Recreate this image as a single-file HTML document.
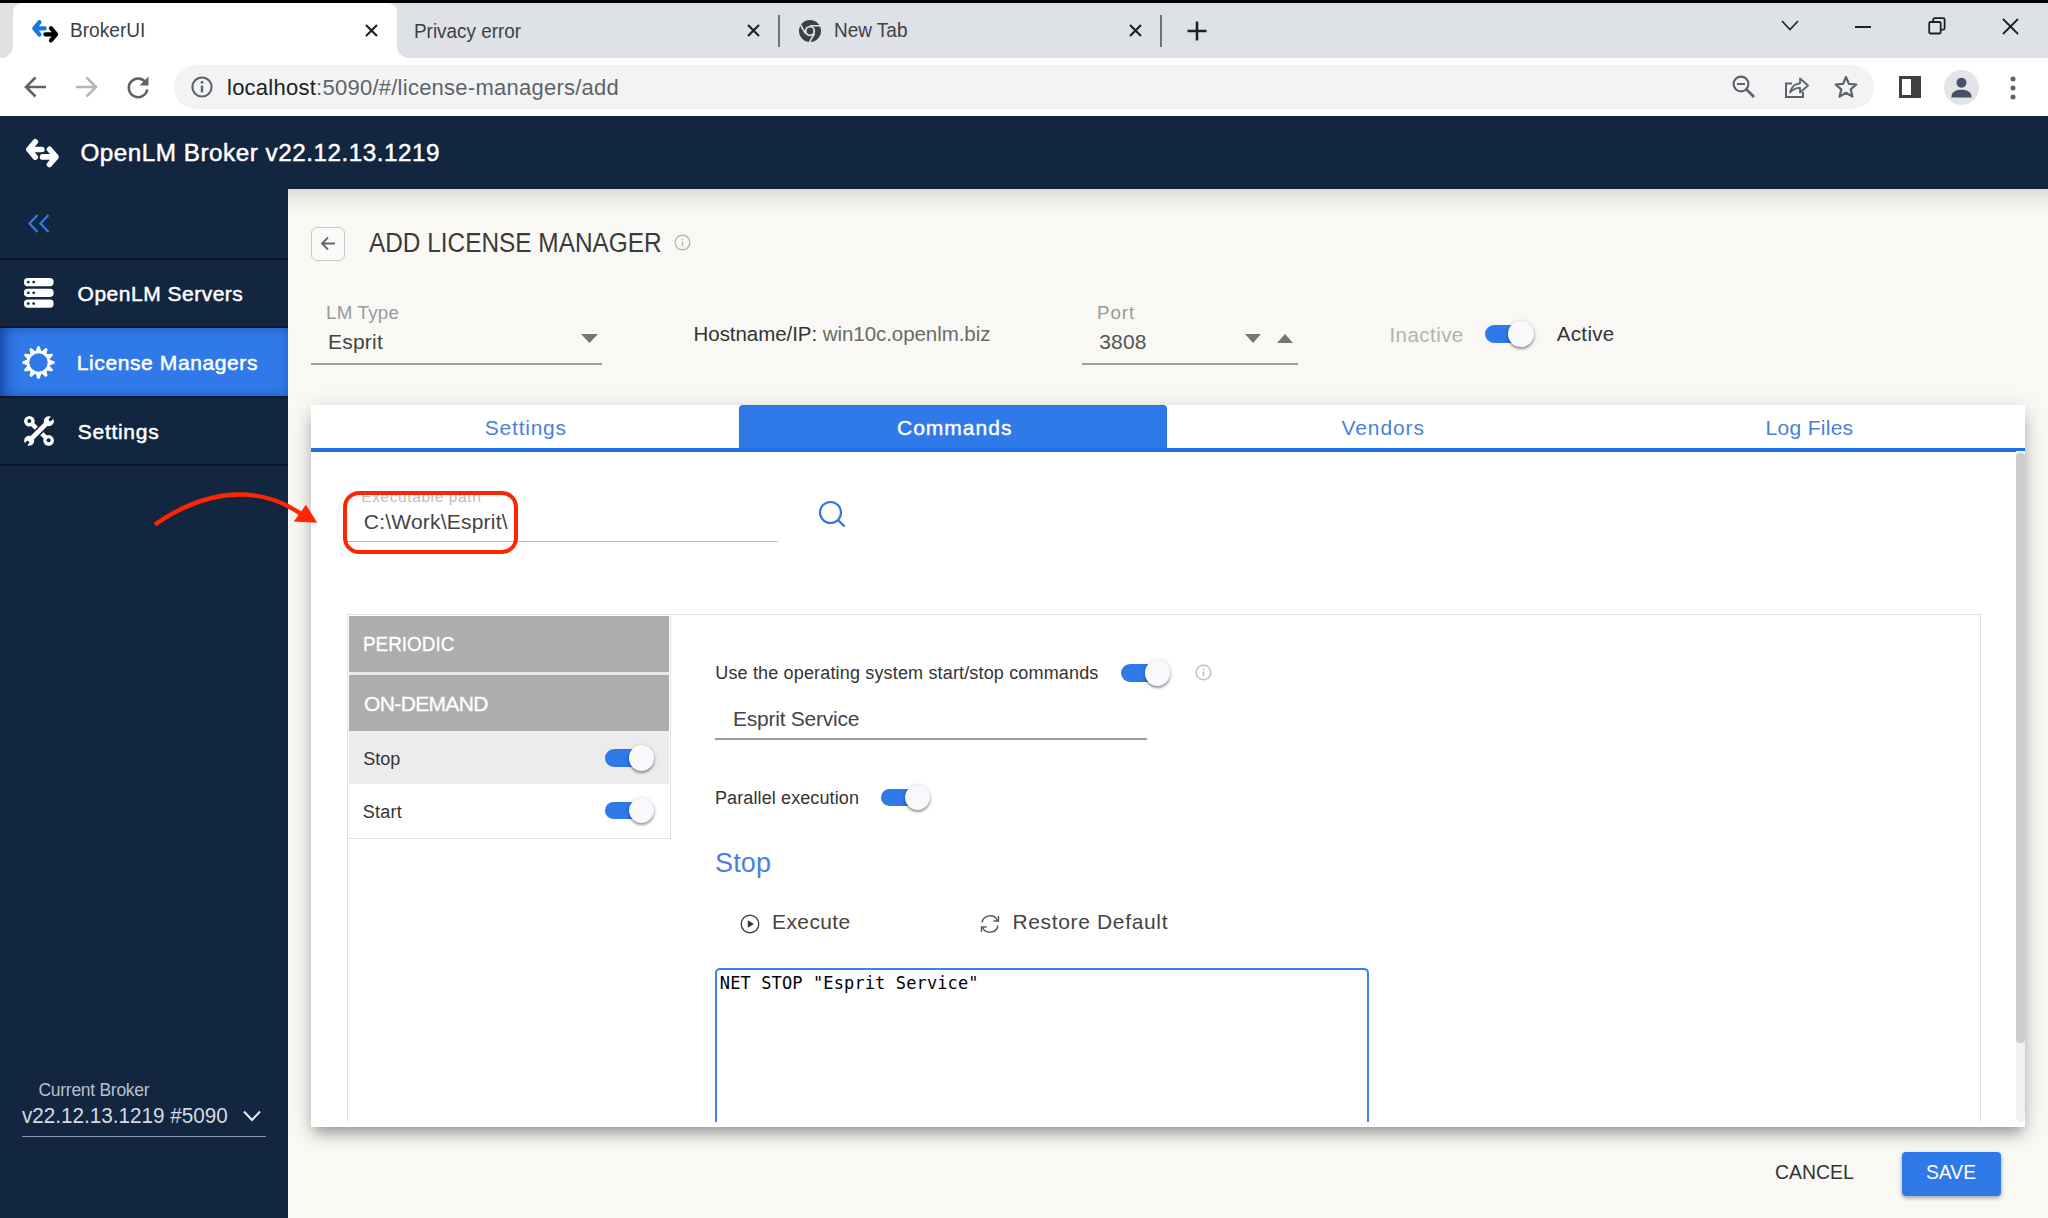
<!DOCTYPE html>
<html lang="en">
<head>
<meta charset="utf-8">
<title>BrokerUI</title>
<style>
*{box-sizing:border-box;margin:0;padding:0}
html,body{width:2048px;height:1218px;overflow:hidden;background:#f9f8f5;font-family:"Liberation Sans",sans-serif;color:#333}
.abs,.t{position:absolute}
.t{white-space:nowrap;line-height:1}
svg{position:absolute;overflow:visible}
/* browser chrome */
#topline{left:0;top:0;width:2048px;height:3px;background:#000}
#tabstrip{left:0;top:3px;width:2048px;height:55px;background:#dee1e6}
#activetab{left:12.600px;top:3px;width:384px;height:55px;background:#fff;border-radius:9px 9px 0 0}
#toolbar{left:0;top:58px;width:2048px;height:58px;background:#fff}
#urlpill{left:174px;top:65px;width:1700px;height:44px;border-radius:22px;background:#f1f3f4}
/* app */
#apphead{left:0;top:116px;width:2048px;height:73px;background:#12263f}
#sidebar{left:0;top:189px;width:288px;height:1029px;background:#12263f}
#main{left:288px;top:189px;width:1760px;height:1029px;background:#f9f8f5}

.tab{font-size:21px;transform:translateX(-50%)}
.tg{width:50px;height:18px}
.tg i{position:absolute;left:0;top:0;width:44px;height:17.5px;border-radius:9px;background:#2f79e8}
.tg b{position:absolute;left:23.5px;top:-4px;width:25.5px;height:25.5px;border-radius:50%;background:#f8f9fc;box-shadow:0 2px 2px rgba(0,0,0,.28),0 1px 4px rgba(0,0,0,.25)}
</style>
</head>
<body>
<!-- ===== Browser chrome ===== -->
<div class="abs" id="tabstrip"></div>
<div class="abs" style="left:0;top:3px;width:13px;height:55px;background:#e1e1e1"></div>
<div class="abs" id="topline"></div>
<div class="abs" id="activetab"></div>
<div class="abs" id="toolbar"></div>
<div class="abs" id="urlpill"></div>

<!-- tab flares -->
<svg style="left:0.600px;top:46px" width="12" height="12" viewBox="0 0 12 12"><path d="M12 12H0A12 12 0 0 0 12 0Z" fill="#fff"/></svg>
<svg style="left:396.600px;top:46px" width="12" height="12" viewBox="0 0 12 12"><path d="M0 12H12A12 12 0 0 1 0 0Z" fill="#fff"/></svg>
<!-- favicon active tab -->
<svg style="left:31.800px;top:18.600px" width="26.400" height="24.400" viewBox="0 0 32.8 28.1" fill="none" stroke-linecap="round" stroke-linejoin="round">
  <path d="M9.300 2.800L2.850 10.500L9.300 18.200M2.850 10.500H15.850" stroke="#1a73e8" stroke-width="5.200"/>
  <path d="M23.500 10.300L29.950 17.900L23.500 25.500M29.950 17.900H16.550" stroke="#fff" stroke-width="7.400"/>
  <path d="M23.500 10.300L29.950 17.900L23.500 25.500M29.950 17.900H16.550" stroke="#000" stroke-width="5.200"/>
</svg>
<span class="t" id="tab1" style="left:70.4px;top:20.2px;font-size:20.5px;color:#3c4043;letter-spacing:0px;transform:scaleX(0.932);transform-origin:0 0">BrokerUI</span>
<svg style="left:365px;top:24px" width="13" height="13" viewBox="0 0 13 13"><path d="M1 1L12 12M12 1L1 12" stroke="#202124" stroke-width="2.2" fill="none"/></svg>
<span class="t" id="tab2" style="left:414.4px;top:20.8px;font-size:20.5px;color:#3c4043;letter-spacing:0px;transform:scaleX(0.921);transform-origin:0 0">Privacy error</span>
<svg style="left:747px;top:24px" width="13" height="13" viewBox="0 0 13 13"><path d="M1 1L12 12M12 1L1 12" stroke="#202124" stroke-width="2.2" fill="none"/></svg>
<div class="abs" style="left:778px;top:15px;width:1.500px;height:32px;background:#6f7277"></div>
<!-- chrome favicon -->
<svg style="left:798px;top:19px" width="24" height="24" viewBox="0 0 24 24">
  <circle cx="12" cy="12" r="11" fill="#3c4043"/>
  <circle cx="12" cy="12" r="5.2" fill="#dee1e6"/>
  <circle cx="12" cy="12" r="3.4" fill="#3c4043"/>
  <path d="M12 6.8H22M7.5 14.6L2.6 6M16.5 14.6L11.5 23" stroke="#dee1e6" stroke-width="1.6" fill="none"/>
</svg>
<span class="t" id="tab3" style="left:834.4px;top:20.2px;font-size:20.5px;color:#3c4043;letter-spacing:0px;transform:scaleX(0.925);transform-origin:0 0">New Tab</span>
<svg style="left:1129px;top:24px" width="13" height="13" viewBox="0 0 13 13"><path d="M1 1L12 12M12 1L1 12" stroke="#202124" stroke-width="2.2" fill="none"/></svg>
<div class="abs" style="left:1160px;top:15px;width:1.500px;height:32px;background:#6f7277"></div>
<svg style="left:1187px;top:21px" width="20" height="20" viewBox="0 0 20 20"><path d="M10 0.5V19.5M0.5 10H19.5" stroke="#202124" stroke-width="2.6" fill="none"/></svg>
<!-- window controls -->
<svg style="left:1781px;top:20px" width="18" height="11" viewBox="0 0 18 11"><path d="M1 1L9 9.5L17 1" stroke="#202124" stroke-width="1.6" fill="none"/></svg>
<div class="abs" style="left:1855px;top:26px;width:16px;height:2px;background:#202124"></div>
<svg style="left:1928px;top:17px" width="18" height="18" viewBox="0 0 18 18"><rect x="1.2" y="5" width="11.5" height="11.5" rx="1.2" stroke="#202124" stroke-width="1.8" fill="none"/><path d="M5.200 4.600V2.500a1.300 1.300 0 0 1 1.300-1.300H15.300a1.300 1.300 0 0 1 1.300 1.300V11.300a1.300 1.300 0 0 1-1.300 1.300H13.200" stroke="#202124" stroke-width="1.8" fill="none"/></svg>
<svg style="left:2002px;top:18px" width="17" height="17" viewBox="0 0 17 17"><path d="M1 1L16 16M16 1L1 16" stroke="#202124" stroke-width="1.8" fill="none"/></svg>
<!-- toolbar nav -->
<svg style="left:24px;top:76px" width="23" height="22" viewBox="0 0 23 22"><path d="M22 11H3M11.5 1.5L2 11L11.5 20.5" stroke="#5f6368" stroke-width="2.6" fill="none"/></svg>
<svg style="left:75px;top:76px" width="23" height="22" viewBox="0 0 23 22"><path d="M1 11H20M11.5 1.5L21 11L11.5 20.5" stroke="#b4b6b9" stroke-width="2.6" fill="none"/></svg>
<svg style="left:126px;top:75px" width="24" height="24" viewBox="0 0 24 24"><path d="M20.2 8.2A9.3 9.3 0 1 0 21.3 14.4" stroke="#5f6368" stroke-width="2.6" fill="none"/><path d="M22.5 1.5V10.5H13.5Z" fill="#5f6368"/></svg>
<svg style="left:191px;top:76px" width="22" height="22" viewBox="0 0 22 22"><circle cx="11" cy="11" r="9.6" stroke="#5f6368" stroke-width="2" fill="none"/><path d="M11 9.6V16.4" stroke="#5f6368" stroke-width="2.4"/><circle cx="11" cy="6.3" r="1.4" fill="#5f6368"/></svg>
<span class="t" id="url" style="left:227.0px;top:76.6px;font-size:22px;color:#5f6368;letter-spacing:0.25px;transform:none"><span style="color:#202124">localhost</span>:5090/#/license-managers/add</span>
<!-- toolbar right icons -->
<svg style="left:1732px;top:75px" width="24" height="24" viewBox="0 0 24 24"><circle cx="9" cy="9" r="7.4" stroke="#5f6368" stroke-width="2.2" fill="none"/><path d="M14.5 14.5L22 22" stroke="#5f6368" stroke-width="2.6"/><path d="M5 9H13" stroke="#5f6368" stroke-width="2"/></svg>
<svg style="left:1783px;top:75px" width="26" height="24" viewBox="0 0 26 24"><path d="M9 8.5H3V22H20V17" stroke="#5f6368" stroke-width="2" fill="none"/><path d="M7 17.5C8.5 11.5 12.500 8.500 17 8.300V3.500L25 10.500L17 17.500V12.800C12.800 12.800 9.800 14.200 7 17.500Z" stroke="#5f6368" stroke-width="1.8" fill="none" stroke-linejoin="round"/></svg>
<svg style="left:1834px;top:75px" width="24" height="23" viewBox="0 0 24 23"><path d="M12 2L14.9 8.900L22.300 9.500L16.700 14.400L18.400 21.600L12 17.800L5.600 21.600L7.300 14.400L1.700 9.500L9.100 8.900Z" stroke="#5f6368" stroke-width="2.2" fill="none" stroke-linejoin="round"/></svg>
<svg style="left:1899px;top:76px" width="22" height="22" viewBox="0 0 22 22"><rect x="1.5" y="1.5" width="19" height="19" stroke="#3c4043" stroke-width="3" fill="none"/><rect x="12" y="1.5" width="8.5" height="19" fill="#3c4043"/></svg>
<svg style="left:1944px;top:70px" width="35" height="35" viewBox="0 0 35 35"><circle cx="17.5" cy="17.5" r="17.5" fill="#e2e4e9"/><circle cx="17.500" cy="12.800" r="5" fill="#465066"/><path d="M7.500 26.500C7.500 21.500 13 19.800 17.500 19.800S27.500 21.500 27.500 26.500V27.500H7.500Z" fill="#465066"/></svg>
<svg style="left:2010px;top:76px" width="6" height="24" viewBox="0 0 6 24"><circle cx="3" cy="3" r="2.5" fill="#5f6368"/><circle cx="3" cy="12" r="2.5" fill="#5f6368"/><circle cx="3" cy="21" r="2.5" fill="#5f6368"/></svg>
<!--CHROME-->

<!-- ===== App ===== -->
<div class="abs" id="main"></div>
<div class="abs" id="apphead"></div>
<div class="abs" id="sidebar"></div>

<!-- header shadow over main -->
<div class="abs" style="left:288px;top:189px;width:1760px;height:24px;background:linear-gradient(#dddcd9,#eceae7 40%,#f9f8f5)"></div>
<!-- header logo -->
<svg style="left:25.700px;top:138.900px" width="32.800" height="28.100" viewBox="0 0 32.8 28.1" fill="none" stroke-linecap="round" stroke-linejoin="round">
  <path d="M9.300 2.800L2.850 10.500L9.300 18.200M2.850 10.500H15.850" stroke="#fff" stroke-width="5.600"/>
  <path d="M23.500 10.300L29.950 17.900L23.500 25.500M29.950 17.900H16.550" stroke="#12263f" stroke-width="8.600"/>
  <path d="M23.500 10.300L29.950 17.900L23.500 25.500M29.950 17.900H16.550" stroke="#fff" stroke-width="5.600"/>
</svg>
<span class="t" id="hd" style="left:80.5px;top:141.2px;font-size:24.25px;font-weight:normal;-webkit-text-stroke:.5px #fff;color:#fff;letter-spacing:0.51px;transform:none">OpenLM Broker v22.12.13.1219</span>
<!-- sidebar -->
<svg style="left:28px;top:214px" width="22" height="19" viewBox="0 0 22 19"><path d="M9.500 1L1.500 9.500L9.500 18M20.500 1L12.500 9.500L20.500 18" stroke="#2f7bed" stroke-width="2.2" fill="none"/></svg>
<div class="abs" style="left:0;top:258px;width:288px;height:2px;background:#0b1728"></div>
<div class="abs" style="left:0;top:326px;width:288px;height:2px;background:#0b1728"></div>
<div class="abs" style="left:0;top:328px;width:288px;height:69px;background:#2f79e8;box-shadow:inset 14px 0 14px -8px rgba(10,40,120,.5),inset 0 0 8px rgba(10,40,120,.35)"></div>
<div class="abs" style="left:0;top:396px;width:288px;height:2px;background:#0b1728"></div>
<div class="abs" style="left:0;top:464px;width:288px;height:2px;background:#0b1728"></div>
<!-- server icon -->
<svg style="left:23.800px;top:278px" width="29.600" height="29.800" viewBox="0 0 29.6 29.8">
  <rect x="0" y="0" width="29.600" height="8.200" rx="3.600" fill="#fff"/><rect x="0" y="10.700" width="29.600" height="8.200" rx="3.600" fill="#fff"/><rect x="0" y="21.500" width="29.600" height="8.200" rx="3.600" fill="#fff"/>
  <g fill="#12263f"><circle cx="4.300" cy="4.100" r="1.400"/><circle cx="9.700" cy="4.100" r="1.400"/><circle cx="4.300" cy="14.800" r="1.400"/><circle cx="9.700" cy="14.800" r="1.400"/><circle cx="4.300" cy="25.600" r="1.400"/><circle cx="9.700" cy="25.600" r="1.400"/></g>
</svg>
<span class="t" id="sb1" style="left:77.6px;top:282.5px;font-size:21px;font-weight:normal;-webkit-text-stroke:.5px #fff;color:#fff;letter-spacing:0.5px;transform:none">OpenLM Servers</span>
<!-- gear icon -->
<svg style="left:22.300px;top:346px" width="33" height="33" viewBox="-16.5 -16.5 33 33">
  <g fill="#fff"><path id="gt" d="M-1.100 -16.200H1.100L2.900 -10.800H-2.900Z"/><use href="#gt" transform="rotate(30)"/><use href="#gt" transform="rotate(60)"/><use href="#gt" transform="rotate(90)"/><use href="#gt" transform="rotate(120)"/><use href="#gt" transform="rotate(150)"/><use href="#gt" transform="rotate(180)"/><use href="#gt" transform="rotate(210)"/><use href="#gt" transform="rotate(240)"/><use href="#gt" transform="rotate(270)"/><use href="#gt" transform="rotate(300)"/><use href="#gt" transform="rotate(330)"/></g>
  <circle r="10.500" fill="none" stroke="#fff" stroke-width="2.600"/>
</svg>
<span class="t" id="sb2" style="left:76.8px;top:351.6px;font-size:21px;font-weight:normal;-webkit-text-stroke:.5px #fff;color:#fff;letter-spacing:0.6px;transform:none">License Managers</span>
<!-- tools icon -->
<svg style="left:23.600px;top:415.600px" width="30" height="30" viewBox="0 0 30 30">
  <path d="M5.300 5.300L24.600 24.400" stroke="#fff" stroke-width="4.400"/>
  <circle cx="5.400" cy="5.300" r="5.300" fill="#fff"/><circle cx="24.600" cy="24.400" r="5.300" fill="#fff"/>
  <circle cx="5.300" cy="5.100" r="2" fill="#12263f"/><circle cx="24.600" cy="24.200" r="2" fill="#12263f"/>
  <path d="M8.500 21.500L21.500 8.500" stroke="#12263f" stroke-width="8"/>
  <path d="M5.500 24.500L24.500 5.500" stroke="#fff" stroke-width="4.600"/>
  <circle cx="24.800" cy="5.200" r="5" fill="#fff"/><circle cx="5.200" cy="24.800" r="5" fill="#fff"/>
  <path d="M26.300 3.600L30.500 -0.600" stroke="#12263f" stroke-width="3.200" stroke-linecap="round"/>
  <path d="M3.700 26.400L-0.500 30.600" stroke="#12263f" stroke-width="3.200" stroke-linecap="round"/>
</svg>
<span class="t" id="sb3" style="left:77.8px;top:421.0px;font-size:21px;font-weight:normal;-webkit-text-stroke:.5px #fff;color:#fff;letter-spacing:0.71px;transform:none">Settings</span>
<span class="t" id="cb" style="left:38.5px;top:1082.2px;font-size:17.5px;color:#b8c0cc;letter-spacing:-0.28px;transform:none">Current Broker</span>
<span class="t" id="cbv" style="left:22.4px;top:1105.0px;font-size:22px;color:#d5dae2;letter-spacing:0px;transform:scaleX(0.94);transform-origin:0 0">v22.12.13.1219 #5090</span>
<svg style="left:243px;top:1110px" width="18" height="12" viewBox="0 0 18 12"><path d="M1 1.500L9 10L17 1.500" stroke="#e8ebf0" stroke-width="2" fill="none"/></svg>
<div class="abs" style="left:22px;top:1136px;width:244px;height:1.300px;background:#8f99a8"></div>

<!-- ===== main header ===== -->
<div class="abs" style="left:311px;top:227px;width:34px;height:34px;border:1.500px solid #c9c9c9;border-radius:6px;background:#fbfaf8"></div>
<svg style="left:320px;top:236px" width="16" height="15" viewBox="0 0 16 15"><path d="M15 7.500H2M8 1.500L2 7.500L8 13.500" stroke="#666" stroke-width="1.800" fill="none"/></svg>
<span class="t" id="ttl" style="left:369.4px;top:230.4px;font-size:27px;color:#3a3a3a;letter-spacing:0px;transform:scaleX(0.903);transform-origin:0 0">ADD LICENSE MANAGER</span>
<svg style="left:674px;top:234px" width="17" height="17" viewBox="0 0 17 17"><circle cx="8.500" cy="8.500" r="7.300" stroke="#b9b9b9" stroke-width="1.400" fill="none"/><path d="M8.500 7.500V12" stroke="#b9b9b9" stroke-width="1.400"/><circle cx="8.500" cy="5.300" r="0.900" fill="#b9b9b9"/></svg>
<!-- LM type -->
<span class="t" id="lmt" style="left:326.0px;top:304.0px;font-size:18.75px;color:#9a9a9a;letter-spacing:0.22px;transform:none;transform-origin:0 0">LM Type</span>
<span class="t" id="esp" style="left:327.9px;top:331.0px;font-size:21px;color:#444;letter-spacing:0.24px;transform:none">Esprit</span>
<svg style="left:581px;top:334px" width="17" height="9" viewBox="0 0 17 9"><path d="M0 0H17L8.500 9Z" fill="#757575"/></svg>
<div class="abs" style="left:311px;top:363px;width:291px;height:2px;background:#9d9d9d"></div>
<!-- hostname -->
<span class="t" id="host" style="left:693.6px;top:324.0px;font-size:20.5px;color:#6a6a6a;letter-spacing:-0.06px;transform:none"><span style="color:#333">Hostname/IP:</span> win10c.openlm.biz</span>
<!-- port -->
<span class="t" id="port" style="left:1097.1px;top:304.0px;font-size:18.75px;color:#9a9a9a;letter-spacing:0.9px;transform:none">Port</span>
<span class="t" id="portv" style="left:1099.3px;top:330.5px;font-size:21px;color:#555;letter-spacing:0.13px;transform:none">3808</span>
<svg style="left:1245px;top:334px" width="16" height="9" viewBox="0 0 16 9"><path d="M0 0H16L8 9Z" fill="#757575"/></svg>
<svg style="left:1277px;top:334px" width="16" height="9" viewBox="0 0 16 9"><path d="M0 9H16L8 0Z" fill="#757575"/></svg>
<div class="abs" style="left:1082px;top:363px;width:216px;height:2px;background:#9d9d9d"></div>
<!-- active toggle -->
<span class="t" id="inact" style="left:1389.4px;top:325.0px;font-size:20.5px;color:#b3b3b3;letter-spacing:0.46px;transform:none">Inactive</span>
<div class="abs tg" style="left:1484.5px;top:325px"><i></i><b></b></div>
<span class="t" id="act" style="left:1556.8px;top:323.8px;font-size:20.5px;color:#333;letter-spacing:0.32px;transform:none">Active</span>

<!-- ===== card ===== -->
<div class="abs" id="card" style="left:311px;top:405px;width:1714px;height:722px;background:#fff;box-shadow:0 9px 13px -3px rgba(0,0,0,.3),0 5px 22px rgba(0,0,0,.15)"></div>
<div class="abs" style="left:739.400px;top:405px;width:428px;height:44px;background:#2f79e8;border-radius:4px 4px 0 0;border:1.500px solid #2571e7;border-bottom:none"></div>
<div class="abs" style="left:311px;top:448px;width:1714px;height:3.500px;background:#1f6fe6"></div>
<span class="t" id="tb1" style="font-size:21px;left:484.8px;top:417.0px;color:#4a7fe0;letter-spacing:0.77px;transform:none">Settings</span>
<span class="t" id="tb2" style="font-size:21px;left:897.0px;top:417.4px;color:#fff;-webkit-text-stroke:.4px #fff;letter-spacing:1.01px;transform:none">Commands</span>
<span class="t" id="tb3" style="font-size:21px;left:1341.4px;top:417.4px;color:#4a7fe0;letter-spacing:0.93px;transform:none">Vendors</span>
<span class="t" id="tb4" style="font-size:21px;left:1765.6px;top:417.0px;color:#4a7fe0;letter-spacing:0.29px;transform:none">Log Files</span>
<!-- scrollbar -->
<div class="abs" style="left:2015.500px;top:451px;width:9.500px;height:671px;background:#f1f1f1;border-radius:0 0 5px 5px"></div>
<div class="abs" style="left:2015.500px;top:453px;width:9.500px;height:590px;background:#cdcdcd;border-radius:4px"></div>
<!-- executable path -->
<span class="t" id="exl" style="left:361.2px;top:489.2px;font-size:15.5px;color:#bdbdbd;letter-spacing:0.6px;transform:none">Executable path</span>
<span class="t" id="exv" style="left:363.8px;top:511.0px;font-size:21px;color:#444;letter-spacing:0.21px;transform:none">C:\Work\Esprit\</span>
<div class="abs" style="left:347px;top:540.600px;width:431px;height:1.800px;background:#b4bbc3"></div>
<svg style="left:818px;top:500px" width="28" height="28" viewBox="0 0 28 28"><circle cx="12.500" cy="12.500" r="10.500" stroke="#2f76e6" stroke-width="2.200" fill="none"/><path d="M20 20L26.500 26.500" stroke="#2f76e6" stroke-width="2.400"/></svg>
<!-- red annotation -->
<div class="abs" style="left:343.200px;top:491px;width:175px;height:63px;border:4.200px solid #ff2500;border-radius:16px"></div>
<svg style="left:0;top:0" width="340" height="560" viewBox="0 0 340 560"><path d="M155 524.500C186 503 214 494.500 240 494.500C262 494.500 284 502 301 514" stroke="#ff2500" stroke-width="4.400" fill="none"/><path d="M317.200 522.800L306 504.800L293.800 521.400Z" fill="#ff2500"/></svg>
<!-- inner box -->
<div class="abs" style="left:346.500px;top:614px;width:1634px;height:508.500px;border:1.500px solid #e2e2e2;border-bottom:none"></div>
<div class="abs" style="left:346.500px;top:614px;width:324px;height:224.500px;border:1.500px solid #e0e0e0;background:#fff"></div>
<div class="abs" style="left:349px;top:671px;width:320px;height:5px;background:#e9e9e9"></div>
<div class="abs" style="left:349px;top:616px;width:320px;height:56px;background:#adadad"></div>
<div class="abs" style="left:349px;top:675px;width:320px;height:56px;background:#adadad"></div>
<div class="abs" style="left:349px;top:731px;width:320px;height:53px;background:#ececec"></div>
<span class="t" id="per" style="left:363.0px;top:632.6px;font-size:21px;color:#fff;-webkit-text-stroke:.3px #fff;letter-spacing:0px;transform:scaleX(0.899);transform-origin:0 0">PERIODIC</span>
<span class="t" id="ond" style="left:364.1px;top:692.6px;font-size:21px;color:#fff;-webkit-text-stroke:.3px #fff;letter-spacing:-0.65px;transform:none;transform-origin:0 0">ON-DEMAND</span>
<span class="t" id="stp" style="left:363.3px;top:749.8px;font-size:18px;color:#333;letter-spacing:0.0px;transform:none">Stop</span>
<span class="t" id="stt" style="left:362.8px;top:803.0px;font-size:18px;color:#333;letter-spacing:0.25px;transform:none">Start</span>
<div class="abs tg" style="left:605px;top:749px"><i></i><b></b></div>
<div class="abs tg" style="left:605px;top:801.7px"><i></i><b></b></div>
<!-- right panel -->
<span class="t" id="useos" style="left:715.3px;top:663.8px;font-size:18px;color:#333;letter-spacing:0.16px;transform:none">Use the operating system start/stop commands</span>
<div class="abs tg" style="left:1121.3px;top:664px"><i></i><b></b></div>
<svg style="left:1195px;top:664px" width="17" height="17" viewBox="0 0 17 17"><circle cx="8.500" cy="8.500" r="7.300" stroke="#b9b9b9" stroke-width="1.300" fill="none"/><path d="M8.500 7.500V12" stroke="#b9b9b9" stroke-width="1.400"/><circle cx="8.500" cy="5.300" r="0.900" fill="#b9b9b9"/></svg>
<span class="t" id="svc" style="left:733.0px;top:708.4px;font-size:21px;color:#444;letter-spacing:-0.24px;transform:none;transform-origin:0 0">Esprit Service</span>
<div class="abs" style="left:715px;top:738px;width:432px;height:2px;background:#9d9d9d"></div>
<span class="t" id="par" style="left:715.0px;top:788.6px;font-size:18px;color:#333;letter-spacing:0.11px;transform:none">Parallel execution</span>
<div class="abs tg" style="left:881.4px;top:788.7px"><i></i><b></b></div>
<span class="t" id="stoph" style="left:715.0px;top:850.2px;font-size:27px;color:#4a7fe0;letter-spacing:0.13px;transform:none">Stop</span>
<svg style="left:740px;top:914px" width="20" height="20" viewBox="0 0 20 20"><circle cx="10" cy="10" r="8.800" stroke="#444" stroke-width="1.400" fill="none"/><path d="M7.800 6.200L13.800 10L7.800 13.800Z" fill="#333"/></svg>
<span class="t" id="exe" style="left:772.0px;top:911.0px;font-size:21px;color:#444;letter-spacing:0.4px;transform:none">Execute</span>
<svg style="left:979px;top:913px" width="22" height="22" viewBox="0 0 22 22"><path d="M3 9.500A8.200 8.200 0 0 1 18.500 7.500M19 12.500A8.200 8.200 0 0 1 3.500 14.500" stroke="#555" stroke-width="1.400" fill="none"/><path d="M19.500 3V8H14.500M2.500 19V14H7.500" stroke="#555" stroke-width="1.400" fill="none"/></svg>
<span class="t" id="rst" style="left:1012.4px;top:911.0px;font-size:21px;color:#444;letter-spacing:0.66px;transform:none">Restore Default</span>
<div class="abs" style="left:715.400px;top:968px;width:654px;height:154px;border:2px solid #3b82f0;border-bottom:none;border-radius:5px 5px 0 0;background:#fff"></div>
<span class="t" id="net" style="left:719.8px;top:975.4px;font-size:17px;font-family:'DejaVu Sans Mono','Liberation Mono',monospace;color:#000;letter-spacing:0.12px;transform:none">NET STOP "Esprit Service"</span>
<!-- buttons -->
<span class="t" id="cnl" style="left:1775.0px;top:1160.6px;font-size:21px;color:#333;letter-spacing:0px;transform:scaleX(0.926);transform-origin:0 0">CANCEL</span>
<div class="abs" style="left:1902px;top:1152px;width:99px;height:44px;background:#2f79e8;border-radius:4px;box-shadow:0 2px 4px rgba(0,0,0,.35)"></div>
<span class="t" id="sav" style="left:1926.2px;top:1160.6px;font-size:21px;color:#fff;letter-spacing:0px;transform:scaleX(0.919);transform-origin:0 0">SAVE</span>
<!--APP-->

</body>
</html>
